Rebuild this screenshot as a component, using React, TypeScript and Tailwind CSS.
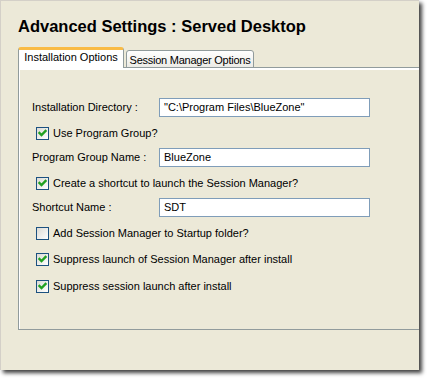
import React from "react";

const Check = ({ checked }: { checked: boolean }) => (
  <div className="w-[13px] h-[13px] border border-[#1C5180] bg-gradient-to-br from-[#DCDBD5] to-white flex-none">
    {checked && (
      <svg width="11" height="11" viewBox="0 0 11 11" className="block">
        <polyline points="2.5,5 4.5,7 8.5,3" fill="none" stroke="#21A121" strokeWidth="2.4" strokeLinecap="square" />
      </svg>
    )}
  </div>
);

const CheckRow = ({ checked, label, mt }: { checked: boolean; label: string; mt: string }) => (
  <div className={`flex items-center gap-[4px] pl-[4px] h-[13px] ${mt}`}>
    <Check checked={checked} />
    <span className="leading-[13px] whitespace-nowrap">{label}</span>
  </div>
);

const InputRow = ({ label, value, mt }: { label: string; value: string; mt: string }) => (
  <div className={`flex items-center h-[19px] ${mt}`}>
    <span className="w-[127px] whitespace-nowrap leading-[13px]">{label}</span>
    <div className="w-[211px] h-[19px] border border-[#7F9DB9] bg-white pl-[4px] flex items-center whitespace-nowrap leading-[13px]">
      {value}
    </div>
  </div>
);

export default function App() {
  return (
    <div className="w-[427px] h-[378px] bg-white overflow-hidden font-['Liberation_Sans',Arial,sans-serif] text-black">
      <div className="w-[419px] h-[370px] bg-[#ECE9D8] border-t border-l border-[#D4D0C8] shadow-[3px_3px_4px_0_rgba(0,0,0,0.75)] overflow-hidden pl-[17px] pt-[15px]">
        <h1 className="text-[16.5px] font-bold leading-[20px] whitespace-nowrap">Advanced Settings : Served Desktop</h1>
        <div className="flex items-end h-[21px] mt-[11px] text-[11px]">
          <div className="relative z-10 h-[21px] w-[106px] bg-white border-t-[3px] border-t-[#F9BB45] border-x border-x-[#919B9C] rounded-t-[3px] pt-[1px] text-center leading-[13px] whitespace-nowrap">
            Installation Options
          </div>
          <div className="h-[18px] w-[128px] ml-[2px] border border-[#919B9C] rounded-t-[3px] bg-gradient-to-b from-white to-[#ECEBE6] pt-[3px] text-center leading-[13px] whitespace-nowrap tracking-[-0.25px]">
            Session Manager Options
          </div>
        </div>
        <div className="relative z-0 -mt-[1px] w-[420px] h-[263px] border border-r-0 border-[#919B9C] bg-[#ECE9D8] shadow-[inset_1px_2px_0_#fff] pl-[13px] pt-[30px] text-[11px] flex flex-col">
          <InputRow label="Installation Directory :" value={'"C:\\Program Files\\BlueZone"'} mt="mt-0" />
          <CheckRow checked label="Use Program Group?" mt="mt-[10px]" />
          <InputRow label="Program Group Name :" value="BlueZone" mt="mt-[8px]" />
          <CheckRow checked label="Create a shortcut to launch the Session Manager?" mt="mt-[10px]" />
          <InputRow label="Shortcut Name :" value="SDT" mt="mt-[8px]" />
          <CheckRow checked={false} label="Add Session Manager to Startup folder?" mt="mt-[10px]" />
          <CheckRow checked label="Suppress launch of Session Manager after install" mt="mt-[13px]" />
          <CheckRow checked label="Suppress session launch after install" mt="mt-[14px]" />
        </div>
      </div>
    </div>
  );
}
